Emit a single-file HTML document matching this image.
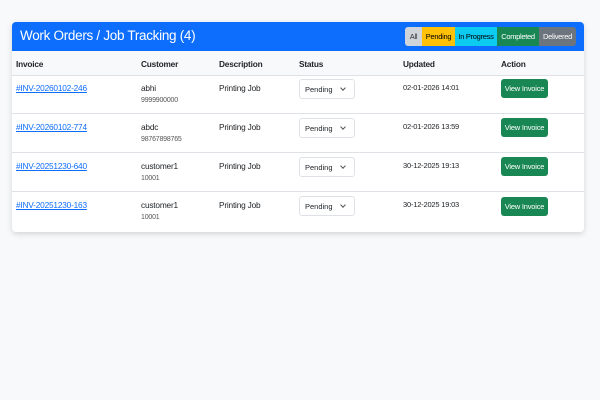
<!DOCTYPE html>
<html><head><style>
body{margin:0;background:#f8f9fa;font-family:"Liberation Sans",sans-serif;width:600px;height:400px;overflow:hidden;color:#212529}
.card{position:absolute;left:12px;top:22px;width:572px;height:210px;background:#fff;border-radius:4px;box-shadow:0 2px 6px rgba(0,0,0,.15);overflow:hidden}
.hd{position:absolute;left:0;top:0;width:572px;height:29px;background:#0d6efd}
.hd h1{position:absolute;left:8px;top:6px;margin:0;font-size:13.5px;font-weight:normal;color:#fff;letter-spacing:-0.3px}
.f{position:absolute;top:5px;height:19px;font-size:7.5px;line-height:19px;text-align:center;letter-spacing:-0.3px}
.th{position:absolute;left:0;top:29px;width:572px;height:24px;background:#f8f9fa;border-bottom:1px solid #dee2e6}
.t{position:absolute;font-size:8.3px;letter-spacing:-0.2px;white-space:nowrap}
.b{font-weight:bold}
.row{position:absolute;left:0;width:572px;border-bottom:1px solid #dee2e6}
a{color:#0d6efd;text-decoration:underline}
.sel{position:absolute;width:54px;height:18px;border:1px solid #dee2e6;border-radius:3px;background:#fff}
.sel span{position:absolute;left:5px;top:5px;font-size:7.5px}
.sel i{position:absolute;right:9px;top:6px;width:3px;height:3px;border-right:1px solid #555;border-bottom:1px solid #555;transform:rotate(45deg)}
.btn{position:absolute;width:47px;height:19px;background:#198754;color:#fff;border-radius:3px;font-size:7.5px;line-height:19px;text-align:center;letter-spacing:-0.2px}
</style></head><body>
<div class="card">
<div class="hd"><h1>Work Orders / Job Tracking (4)</h1>
<div class="f" style="left:393px;width:17px;background:#ced4da;color:#333;border-radius:3px 0 0 3px">All</div>
<div class="f" style="left:410px;width:33px;background:#ffc107;color:#000">Pending</div>
<div class="f" style="left:443px;width:42px;background:#0dcaf0;color:#000">In Progress</div>
<div class="f" style="left:485px;width:42px;background:#198754;color:#fff">Completed</div>
<div class="f" style="left:527px;width:37px;background:#6c757d;color:#fff;border-radius:0 3px 3px 0">Delivered</div>
</div>
<div class="th">
<div class="t b" style="left:4px;top:8px">Invoice</div>
<div class="t b" style="left:129px;top:8px">Customer</div>
<div class="t b" style="left:207px;top:8px">Description</div>
<div class="t b" style="left:287px;top:8px">Status</div>
<div class="t b" style="left:391px;top:8px">Updated</div>
<div class="t b" style="left:489px;top:8px">Action</div>
</div>

<div class="row" style="top:53px;height:38px">
<a class="t" style="left:4px;top:8px">#INV-20260102-246</a>
<div class="t" style="left:129px;top:8px">abhi</div><div class="t" style="left:129px;top:22px;font-size:7px;color:#555">9999900000</div>
<div class="t" style="left:207px;top:8px">Printing Job</div>
<div class="sel" style="left:287px;top:4px"><span>Pending</span><i></i></div>
<div class="t" style="left:391px;top:8px;font-size:7.5px">02-01-2026 14:01</div>
<div class="btn" style="left:489px;top:4px">View Invoice</div>
</div>
<div class="row" style="top:92px;height:38px">
<a class="t" style="left:4px;top:8px">#INV-20260102-774</a>
<div class="t" style="left:129px;top:8px">abdc</div><div class="t" style="left:129px;top:22px;font-size:7px;color:#555">98767898765</div>
<div class="t" style="left:207px;top:8px">Printing Job</div>
<div class="sel" style="left:287px;top:4px"><span>Pending</span><i></i></div>
<div class="t" style="left:391px;top:8px;font-size:7.5px">02-01-2026 13:59</div>
<div class="btn" style="left:489px;top:4px">View Invoice</div>
</div>
<div class="row" style="top:131px;height:38px">
<a class="t" style="left:4px;top:8px">#INV-20251230-640</a>
<div class="t" style="left:129px;top:8px">customer1</div><div class="t" style="left:129px;top:22px;font-size:7px;color:#555">10001</div>
<div class="t" style="left:207px;top:8px">Printing Job</div>
<div class="sel" style="left:287px;top:4px"><span>Pending</span><i></i></div>
<div class="t" style="left:391px;top:8px;font-size:7.5px">30-12-2025 19:13</div>
<div class="btn" style="left:489px;top:4px">View Invoice</div>
</div>
<div class="row" style="top:170px;height:40px;border-bottom:none">
<a class="t" style="left:4px;top:8px">#INV-20251230-163</a>
<div class="t" style="left:129px;top:8px">customer1</div><div class="t" style="left:129px;top:22px;font-size:7px;color:#555">10001</div>
<div class="t" style="left:207px;top:8px">Printing Job</div>
<div class="sel" style="left:287px;top:4px"><span>Pending</span><i></i></div>
<div class="t" style="left:391px;top:8px;font-size:7.5px">30-12-2025 19:03</div>
<div class="btn" style="left:489px;top:5px">View Invoice</div>
</div>
</div>
</body></html>
